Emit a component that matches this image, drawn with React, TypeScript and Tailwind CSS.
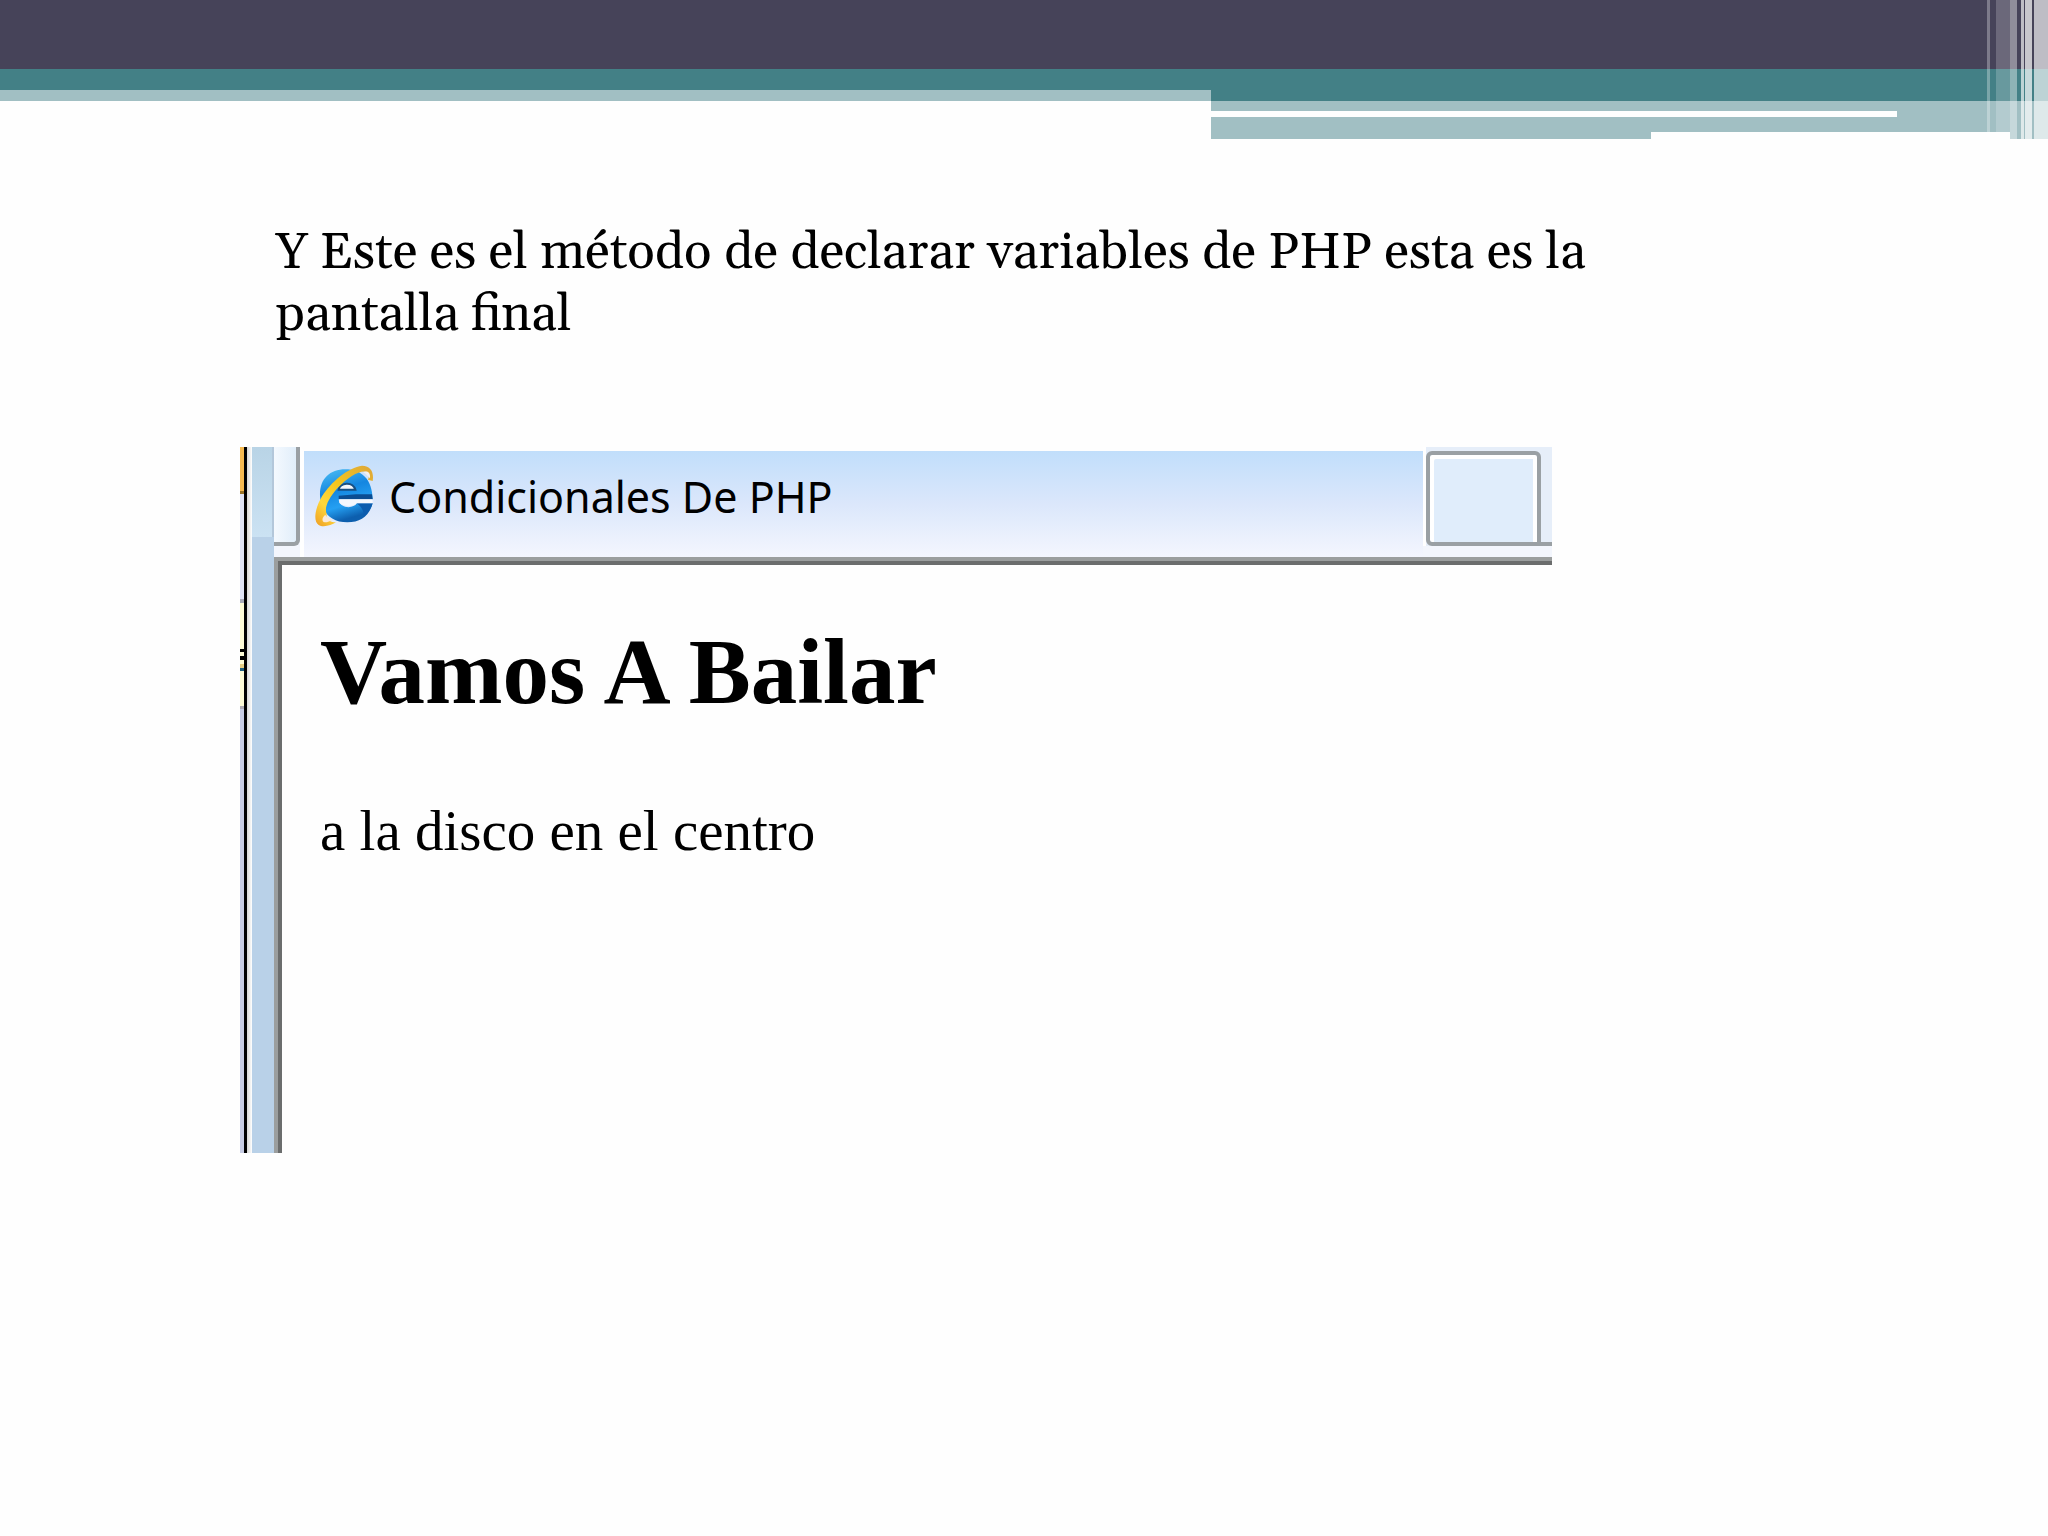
const Header = () => {
  return (
    <header className="relative">
      <div className="h-[69px] bg-[#464359]" />

      <div className="flex items-start">
        <div className="w-[1211px] shrink-0">
          <div className="h-[21px] bg-[#438086]" />
          <div className="h-[11px] bg-[#a1bfc3]" />
        </div>

        <div className="flex-1">
          <div className="h-8 bg-[#438086]" />
          <div className="h-[10px] bg-[#a1bfc3]" />
          <div className="flex h-[6px] justify-end">
            <div className="w-[151px] bg-[#a1bfc3]" />
          </div>
          <div className="h-[15px] bg-[#a1bfc3]" />
          <div className="flex h-[7px] justify-between">
            <div className="w-[440px] bg-[#a1bfc3]" />
            <div className="w-[38px] bg-[#a1bfc3]" />
          </div>
        </div>
      </div>

      {/* translucent vertical stripes over the right edge */}
      <div className="absolute top-0 right-0 flex h-full items-start">
        <div className="h-[132px] w-[3px] bg-white/30" />
        <div className="h-[132px] w-[6px]" />
        <div className="h-[132px] w-[14px] bg-white/20" />
        <div className="h-full w-[7px] bg-white/40" />
        <div className="h-full w-[4px]" />
        <div className="h-full w-[3px] bg-white/65" />
        <div className="h-full w-px" />
        <div className="h-full w-[7px] bg-white/70" />
        <div className="h-full w-[2px]" />
        <div className="h-full w-[14px] bg-white/65" />
      </div>
    </header>
  );
};

const ExplorerIcon = () => {
  return (
    <svg viewBox="0 0 228 228" className="size-[76px] shrink-0" aria-hidden="true">
      <defs>
        <linearGradient id="letter" x1="0" y1="0" x2="0.3" y2="1">
          <stop offset="0" stopColor="#4fc0f5" />
          <stop offset="0.45" stopColor="#1486e0" />
          <stop offset="0.75" stopColor="#25a0f2" />
          <stop offset="1" stopColor="#0d5fae" />
        </linearGradient>
        <linearGradient id="ring" x1="1" y1="0" x2="0" y2="1">
          <stop offset="0" stopColor="#dda63a" />
          <stop offset="0.45" stopColor="#f3c51e" />
          <stop offset="0.75" stopColor="#ffd83c" />
          <stop offset="1" stopColor="#ee9c22" />
        </linearGradient>
      </defs>
      <path
        d="M42 110C40 62 70 31 118 31C166 31 199 60 200 121H98C100 150 144 150 152 133H200C190 170 164 190 124 190C76 190 44 160 42 110Z"
        fill="url(#letter)"
      />
      <path d="M152 133H200C195 150 186 163 172 173C176 158 166 143 152 133Z" fill="#0c5cae" />
      <path d="M150 106H198L200 121H98V110Z" fill="#0b4d92" />
      <path d="M98 92C102 70 140 66 148 92Z" fill="#f4f7fb" stroke="#174f82" strokeWidth="6" />
      <path d="M100 121H200V133H152C142 144 112 143 100 132Z" fill="#f5f7fd" />
      <path
        d="M200 66C204 42 196 20 168 20C128 24 74 70 48 112C28 146 20 186 38 198C50 206 76 200 90 190C74 190 60 184 62 164C54 146 68 118 94 88C126 54 160 34 180 38C190 42 190 54 186 62Z"
        fill="url(#ring)"
      />
      <path d="M58 168C48 174 46 188 56 190C64 190 74 186 80 182C70 180 64 176 58 168Z" fill="#fbe9d8" />
      <path d="M172 40C184 34 194 40 192 58C186 52 180 44 172 40Z" fill="#f1f0ee" />
    </svg>
  );
};

// sliver of the window that sits behind the browser
const WindowBehind = () => {
  return (
    <div className="flex w-1 shrink-0 flex-col">
      <div className="h-11 bg-[#f6ba50]" />
      <div className="h-[3px] bg-[#9a7428]" />
      <div className="h-[105px] bg-[#e0e4f5]" />
      <div className="h-1 bg-[#a9abb8]" />
      <div className="h-[46px] bg-[#fdfbd6]" />
      <div className="h-[3px] bg-black" />
      <div className="h-1 bg-[#fdfbd6]" />
      <div className="h-1 bg-black" />
      <div className="h-1 bg-[#fdfbd6]" />
      <div className="h-1 bg-[#e6cf85]" />
      <div className="h-[3px] bg-[#1f5f80]" />
      <div className="h-[35px] bg-[#fdfbd6]" />
      <div className="h-[3px] bg-[#b0adb4]" />
      <div className="flex-1 bg-[#c7cce3]" />
    </div>
  );
};

const TabBar = () => {
  return (
    <div className="flex h-[110px] bg-[#f3f6fd]">
      <div className="h-[99px] w-[26px] shrink-0 rounded-br-md border-r-4 border-b-4 border-[#9aa0a4] bg-linear-to-r from-[#f4f9fe] to-[#e1eefa]" />

      <div className="flex-1 border-t-4 border-t-[#fefefe] border-l-4 border-l-white bg-linear-to-b from-[#c1defb] via-[#dbe7fb] to-[#f4f6fe]">
        <div className="flex h-[92px] items-center gap-[7px] pl-[2px]">
          <ExplorerIcon />
          <h1 className="font-['Noto_Sans','Open_Sans',sans-serif] text-[43px] leading-[64px]">
            Condicionales De PHP
          </h1>
        </div>
      </div>

      <div className="flex h-[99px] shrink-0 border-l-[3px] border-white bg-[#e6eef9] pt-1">
        <button
          type="button"
          aria-label="Nueva pestaña"
          className="w-[115px] rounded-t-md rounded-bl-md border-4 border-[#9aa0a4] bg-[#e0edfb] shadow-[inset_4px_4px_0_#fff,inset_-4px_0_0_#fff]"
        />
        <div className="w-[11px] border-b-4 border-[#9aa0a4]" />
      </div>
    </div>
  );
};

const BrowserWindow = () => {
  return (
    <div className="flex h-[706px] max-w-[1312px]">
      <WindowBehind />
      <div className="w-[3px] shrink-0 bg-black" />
      <div className="w-[5px] shrink-0 bg-linear-to-r from-[#d8d8d6] to-white" />
      <div className="w-[22px] shrink-0 bg-[#b9d1e8]">
        <div className="h-[90px] border-r-2 border-[#b3c7da] bg-linear-to-b from-[#b9d4e6] to-[#cbe2f3]" />
      </div>

      <div className="flex flex-1 flex-col">
        <TabBar />

        <div className="flex flex-1 border-t-4 border-l-4 border-[#9b9e9e]">
          <div className="flex-1 border-t-4 border-l-4 border-[#6b6d6d] bg-[#fefefe] pt-[53px] pl-[38px] font-['Liberation_Serif',serif]">
            <h2 className="text-[93px] leading-[108px] font-bold">Vamos A Bailar</h2>
            <p className="mt-[72px] text-[57px] leading-[66px]">a la disco en el centro</p>
          </div>
        </div>
      </div>
    </div>
  );
};

export default function App() {
  return (
    <main className="min-h-screen bg-[#fefefe] text-black">
      <Header />

      <section className="px-[240px] pt-[83px]">
        <p className="max-w-[1400px] pl-9 font-['Gelasio','Liberation_Serif',serif] text-[51px] leading-[62px]">
          Y Este es el método de declarar variables de PHP esta es la pantalla final
        </p>

        <div className="mt-[101px]">
          <BrowserWindow />
        </div>
      </section>
    </main>
  );
}
